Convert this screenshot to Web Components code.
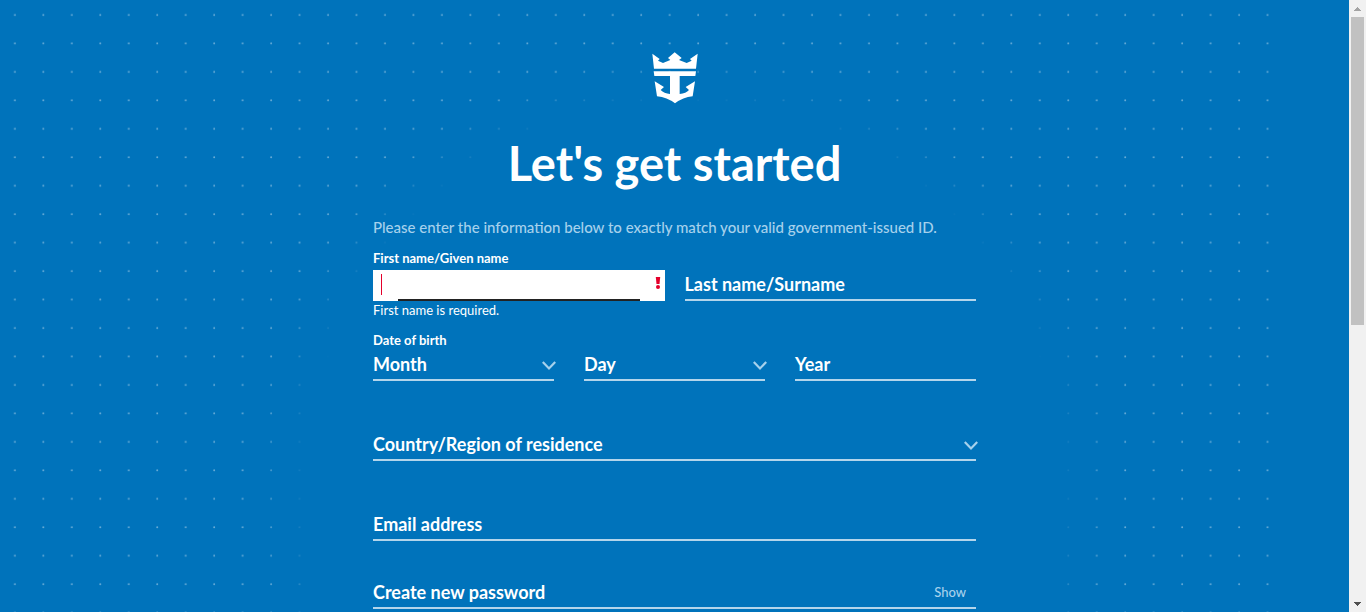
<!DOCTYPE html>
<html lang="en">
<head>
<meta charset="utf-8">
<meta name="viewport" content="width=device-width, initial-scale=1">
<title>Create account</title>
<style>
  body { margin: 0; background: #0073bb; color: #fff; font-family: Lato, "Open Sans", sans-serif; }
</style>
</head>
<body>
<app-shell>
  <signup-form></signup-form>
</app-shell>

<script>
class Base extends HTMLElement {
  constructor() {
    super();
    this.attachShadow({ mode: "open" }).innerHTML = this.view();
  }
}
const attr = (el, n, d = "") => el.getAttribute(n) ?? d;

/* Dotted pattern that fades out behind the form */
customElements.define("dot-backdrop", class extends Base {
  view() {
    return `<style>
      :host { display: block; position: absolute; inset: 0; pointer-events: none; overflow: hidden; }
      svg { display: block; width: 95%; height: 100%;
        -webkit-mask-image: radial-gradient(circle at 684px 480px, transparent 375px, #000 430px);
        mask-image: radial-gradient(circle at 684px 480px, transparent 375px, #000 430px); }
    </style>
    <svg aria-hidden="true">
      <defs><pattern id="dots" width="28.47" height="28.46" patternUnits="userSpaceOnUse">
        <circle cx="14.9" cy="14.9" r="0.95" fill="#fff" fill-opacity="0.42"/>
      </pattern></defs>
      <rect width="100%" height="100%" fill="url(#dots)"/>
    </svg>`;
  }
});

customElements.define("crown-logo", class extends Base {
  view() {
    return `<style>
      :host { display: block; }
      svg { display: block; width: 46px; height: 52px; }
    </style>
    <svg viewBox="35 20 138 156" role="img" aria-label="Crown and anchor" fill="#fff">
      <path d="M36 25L58 41L53 46L68 53L90 44L83 38L103 21L124 38L116 44L139 53L154 46L149 41L172 25L167 70H41Z"/>
      <path d="M40 78H167L165 92H118V146Q137 145 146 134L136 125L164 108L157 153Q128 156 104 174Q80 156 50 153L43 108L71 125L61 134Q71 145 89 146V92H42Z"/>
    </svg>`;
  }
});

customElements.define("text-field", class extends Base {
  view() {
    const label = attr(this, "label"), type = attr(this, "type", "text"), error = attr(this, "error");
    return `<style>
      :host { display: block; }
      .box { display: grid; box-sizing: border-box; grid-template-columns: minmax(0, 1fr) auto; position: relative; height: 31px; padding-bottom: 2px; border-bottom: 2px solid #b3d5eb; align-items: center; }
      input { grid-area: 1 / 1 / 2 / 3; box-sizing: border-box; width: 100%; height: 100%; padding: 0; border: 0; outline: 0; background: none; color: #fff; font: 700 18px/24px Lato, sans-serif; }
      label { font-weight: 700; font-size: 18px; line-height: 24px; }
      .box label { grid-area: 1 / 1; pointer-events: none; z-index: 1; }
      ::slotted(button) { grid-area: 1 / 2; z-index: 1; }
      .above { display: block; font-size: 13px; line-height: 20px; padding-bottom: 2px; }
      .invalid { background: #fff; border: 0; }
      .invalid input { color: #222; padding: 0 24px 0 8px; }
      .invalid::before { content: ""; position: absolute; left: 8px; top: 4px; width: 1px; height: 21px; background: #e4002b; }
      .invalid::after { content: ""; position: absolute; left: 25px; right: 25px; bottom: 0; height: 2px; background: #222; }
      .box svg { grid-area: 1 / 2; display: block; width: 6px; height: 12px; margin: 0 4px 3px 0; z-index: 1; }
      p { margin: 0; font-size: 13px; line-height: 18px; }
    </style>` + (error ? `
    <label class="above" for="field">${label}</label>
    <div class="box invalid">
      <input id="field" type="${type}" aria-invalid="true" aria-describedby="error">
      <svg viewBox="0 0 6 12" aria-hidden="true" fill="#e4002b"><path d="M.8 0H5.2L4.5 7H1.5Z"/><circle cx="3" cy="10" r="2"/></svg>
    </div>
    <p id="error">${error}</p>` : `
    <div class="box">
      <input id="field" type="${type}">
      <label for="field">${label}</label>
      <slot name="action"></slot>
    </div>`);
  }
});

customElements.define("select-field", class extends Base {
  view() {
    const label = attr(this, "label");
    return `<style>
      :host { display: block; }
      .box { display: grid; box-sizing: border-box; grid-template-columns: minmax(0, 1fr) 12px; height: 31px; border-bottom: 2px solid #b3d5eb; align-items: center; }
      select { grid-area: 1 / 1 / 2 / 3; box-sizing: border-box; appearance: none; width: 100%; height: 100%; margin: 0; padding: 0 0 2px; border: 0; outline: 0; background: none; color: #fff; font: 700 18px/24px Lato, sans-serif; }
      option { color: #222; }
      svg { grid-area: 1 / 2; display: block; width: 14px; height: 9px; margin-top: 2px; pointer-events: none; }
    </style>
    <div class="box">
      <select aria-label="${label}"><option>${label}</option></select>
      <svg viewBox="0 0 14 9" aria-hidden="true"><path d="M.8 1L7 7.4L13.2 1" fill="none" stroke="#a6d1ec" stroke-width="2.2"/></svg>
    </div>`;
  }
});

customElements.define("signup-form", class extends Base {
  view() {
    return `<style>
      :host { display: block; position: relative; }
      .page { position: relative; display: flex; flex-direction: column; align-items: center; padding-top: 52px; }
      h1 { margin: 31px 0 0; font-weight: 700; font-size: 47px; line-height: 56px; }
      form { box-sizing: border-box; width: 100%; max-width: 603px; padding-bottom: 2px; }
      .intro { margin: 26px 0 11px; font-size: 15px; line-height: 20px; font-weight: 500; color: #a6d1ec; }
      .names { display: grid; grid-template-columns: 1fr 1fr; column-gap: 20px; align-items: start; }
      .names text-field + text-field { padding-top: 22px; }
      fieldset { margin: 0; padding: 0; border: 0; min-width: 0; }
      .dob { margin-top: 11px; }
      legend { padding: 0; font-size: 13px; line-height: 20px; font-weight: 700; }
      .parts { display: grid; grid-template-columns: repeat(3, 1fr); column-gap: 30px; }
      .gap-l { margin-top: 49px; }
      .gap-m { margin-top: 37px; }
      button { margin: 0 10px 0 0; padding: 0; border: 0; background: none; color: #a6d1ec; font: 500 13px/20px Lato, sans-serif; }
    </style>
    <dot-backdrop></dot-backdrop>
    <div class="page">
      <crown-logo></crown-logo>
      <h1>Let's get started</h1>
      <form novalidate>
        <p class="intro">Please enter the information below to exactly match your valid government-issued ID.</p>
        <div class="names">
          <text-field label="First name/Given name" error="First name is required."></text-field>
          <text-field label="Last name/Surname"></text-field>
        </div>
        <fieldset class="dob">
          <legend>Date of birth</legend>
          <div class="parts">
            <select-field label="Month"></select-field>
            <select-field label="Day"></select-field>
            <text-field label="Year"></text-field>
          </div>
        </fieldset>
        <select-field class="gap-l" label="Country/Region of residence"></select-field>
        <text-field class="gap-l" label="Email address" type="email"></text-field>
        <text-field class="gap-m" label="Create new password" type="password"><button slot="action" type="button">Show</button></text-field>
      </form>
    </div>`;
  }
});

/* Vertical scroll rail beside the scrolling page */
customElements.define("scroll-rail", class extends Base {
  view() {
    return `<style>
      :host { display: grid; grid-template-rows: 17px 1fr 17px; background: #f1f1f1; }
      button { display: grid; place-items: center; padding: 0; border: 0; background: none; }
      svg { display: block; width: 7px; height: 4px; }
      .track { display: grid; grid-template-rows: 8fr 7fr; }
      .thumb { margin: 0 2px; background: #c1c1c1; }
    </style>
    <button type="button" aria-label="Scroll up"><svg viewBox="0 0 7 4" fill="#a3a3a3" shape-rendering="crispEdges"><path d="M3 0H4V1H5V2H6V3H7V4H0V3H1V2H2V1H3Z"/></svg></button>
    <div class="track"><div class="thumb"></div></div>
    <button type="button" aria-label="Scroll down"><svg viewBox="0 0 7 4" fill="#505050" shape-rendering="crispEdges"><path d="M0 0H7V1H6V2H5V3H4V4H3V3H2V2H1V1H0Z"/></svg></button>`;
  }
});

customElements.define("app-shell", class extends Base {
  view() {
    return `<style>
      :host { display: grid; grid-template-columns: minmax(0, 1fr) 17px; height: 100vh; }
      main { display: grid; overflow: auto; scrollbar-width: none; }
    </style>
    <main><slot></slot></main>
    <scroll-rail></scroll-rail>`;
  }
});
</script>
</body>
</html>
